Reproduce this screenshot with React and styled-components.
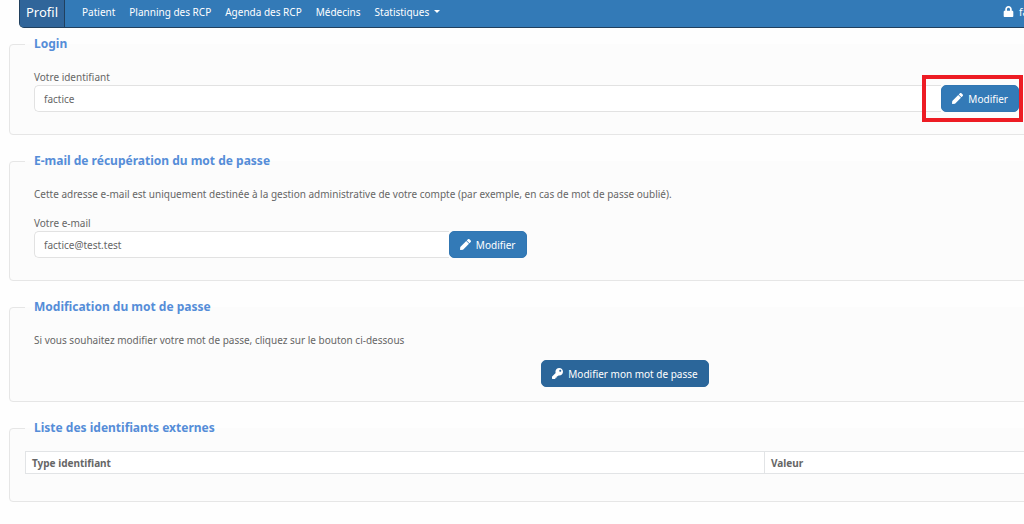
import React from "react";
import styled, { createGlobalStyle } from "styled-components";
import { FaLock, FaKey, FaPen } from "react-icons/fa";

const GlobalStyle = createGlobalStyle`
  *, *::before, *::after { box-sizing: border-box; }
  body {
    margin: 0;
    background: #fefefe;
    color: #666;
    font: 10px/16px "Noto Sans", "Open Sans", sans-serif;
  }
  button, input { font: inherit; }
`;

const Viewport = styled.div`
  overflow: hidden;
`;

const Page = styled.div`
  width: calc(100vw + 226px);
  padding: 0 9px 20px;
`;

const Navbar = styled.nav`
  display: flex;
  align-items: stretch;
  height: 28px;
  margin: 0 10px;
  background: #337ab7;
  border: solid #21405e;
  border-width: 0 1px 1px;
  border-radius: 0 0 5px 5px;
  overflow: hidden;
  color: #fff;
`;

const NavLink = styled.a`
  display: flex;
  align-items: center;
  gap: 5px;
  padding: 0 7px 4px;
  color: inherit;
  text-decoration: none;
  white-space: nowrap;
`;

const Brand = styled(NavLink)`
  padding: 0 6px 4px;
  margin-right: 10px;
  background: #30659a;
  border-right: 1px solid #21405e;
  font-size: 13px;
`;

const Caret = styled.span`
  border: solid transparent;
  border-width: 3px 3px 0;
  border-top-color: currentColor;
`;

const Account = styled.div`
  display: flex;
  width: 234px;
  margin-left: auto;
`;

const Sections = styled.main`
  display: flex;
  flex-direction: column;
  gap: 16px;
  padding-top: 6px;
`;

const Panel = styled.fieldset`
  min-width: 0;
  margin: 0;
  padding: 0 15px;
  border: 1px solid #e6e6e6;
  border-radius: 4px;
  background: #fcfcfc;
`;

const Legend = styled.legend`
  width: 100%;
  padding: 0 9px;
  color: #558dd8;
  font-size: 12px;
  font-weight: 700;
  line-height: 20px;
`;

const Content = styled.div`
  padding: 15px 9px ${(p) => (p.$compact ? 14 : 22)}px;
`;

const TableArea = styled.div`
  padding: 13px 0 27px;
`;

const Text = styled.p`
  margin: 0 0 ${(p) => (p.$compact ? 11 : 12)}px;
  line-height: 17px;
`;

const Columns = styled.div`
  display: grid;
  grid-template-columns: repeat(12, 1fr);
`;

const Field = styled.div`
  grid-column: span ${(p) => p.$span};
`;

const Label = styled.label`
  display: block;
`;

const InputGroup = styled.div`
  display: flex;
`;

const TextInput = styled.input`
  flex: 1;
  min-width: 0;
  height: 27px;
  padding: 0 9px;
  border: 1px solid #e2e2e2;
  border-right: 0;
  border-radius: 5px 0 0 5px;
  background: #fff;
  color: #666;
`;

const Button = styled.button`
  display: flex;
  align-items: center;
  gap: 5px;
  height: 27px;
  padding: 0 10px;
  border: 1px solid ${(p) => (p.$dark ? "#2b669a" : "#3176b2")};
  border-radius: 5px;
  background: ${(p) => (p.$dark ? "#2b669a" : "#337ab7")};
  color: #fff;
  white-space: nowrap;
`;

const Highlighted = styled.div`
  position: relative;
  &::after {
    content: "";
    position: absolute;
    inset: -10px -4px -10px -19px;
    border: 4px solid #ed1c24;
    pointer-events: none;
  }
`;

const Centered = styled.div`
  display: flex;
  justify-content: center;
`;

const Table = styled.table`
  width: 100%;
  border-collapse: collapse;
  table-layout: fixed;
  background: #fff;
`;

const HeadCell = styled.th`
  width: ${(p) => p.$width || "auto"};
  height: 22px;
  padding: 2px 6px;
  border: 1px solid #e2e4e6;
  text-align: left;
`;

const links = ["Patient", "Planning des RCP", "Agenda des RCP", "Médecins"];

function EditButton() {
  return (
    <Button type="button">
      <FaPen size={11} aria-hidden="true" />
      Modifier
    </Button>
  );
}

export default function App() {
  return (
    <Viewport>
      <GlobalStyle />
      <Page>
        <Navbar>
          <Brand href="#profil">Profil</Brand>
          {links.map((label) => (
            <NavLink key={label} href="#nav">{label}</NavLink>
          ))}
          <NavLink href="#statistiques">Statistiques <Caret /></NavLink>
          <Account>
            <NavLink href="#compte"><FaLock size={11} aria-hidden="true" />factice</NavLink>
          </Account>
        </Navbar>
        <Sections>
          <Panel>
            <Legend>Login</Legend>
            <Content>
              <Columns>
                <Field $span={10}>
                  <Label htmlFor="identifiant">Votre identifiant</Label>
                  <InputGroup>
                    <TextInput id="identifiant" defaultValue="factice" />
                    <Highlighted><EditButton /></Highlighted>
                  </InputGroup>
                </Field>
              </Columns>
            </Content>
          </Panel>
          <Panel>
            <Legend>E-mail de récupération du mot de passe</Legend>
            <Content>
              <Text>
                Cette adresse e-mail est uniquement destinée à la gestion administrative de votre
                compte (par exemple, en cas de mot de passe oublié).
              </Text>
              <Columns>
                <Field $span={5}>
                  <Label htmlFor="email">Votre e-mail</Label>
                  <InputGroup>
                    <TextInput id="email" type="email" defaultValue="factice@test.test" />
                    <EditButton />
                  </InputGroup>
                </Field>
              </Columns>
            </Content>
          </Panel>
          <Panel>
            <Legend>Modification du mot de passe</Legend>
            <Content $compact>
              <Text $compact>
                Si vous souhaitez modifier votre mot de passe, cliquez sur le bouton ci-dessous
              </Text>
              <Centered>
                <Button type="button" $dark>
                  <FaKey size={11} aria-hidden="true" />
                  Modifier mon mot de passe
                </Button>
              </Centered>
            </Content>
          </Panel>
          <Panel>
            <Legend>Liste des identifiants externes</Legend>
            <TableArea>
              <Table>
                <thead>
                  <tr>
                    <HeadCell scope="col" $width="739px">Type identifiant</HeadCell>
                    <HeadCell scope="col">Valeur</HeadCell>
                  </tr>
                </thead>
              </Table>
            </TableArea>
          </Panel>
        </Sections>
      </Page>
    </Viewport>
  );
}
